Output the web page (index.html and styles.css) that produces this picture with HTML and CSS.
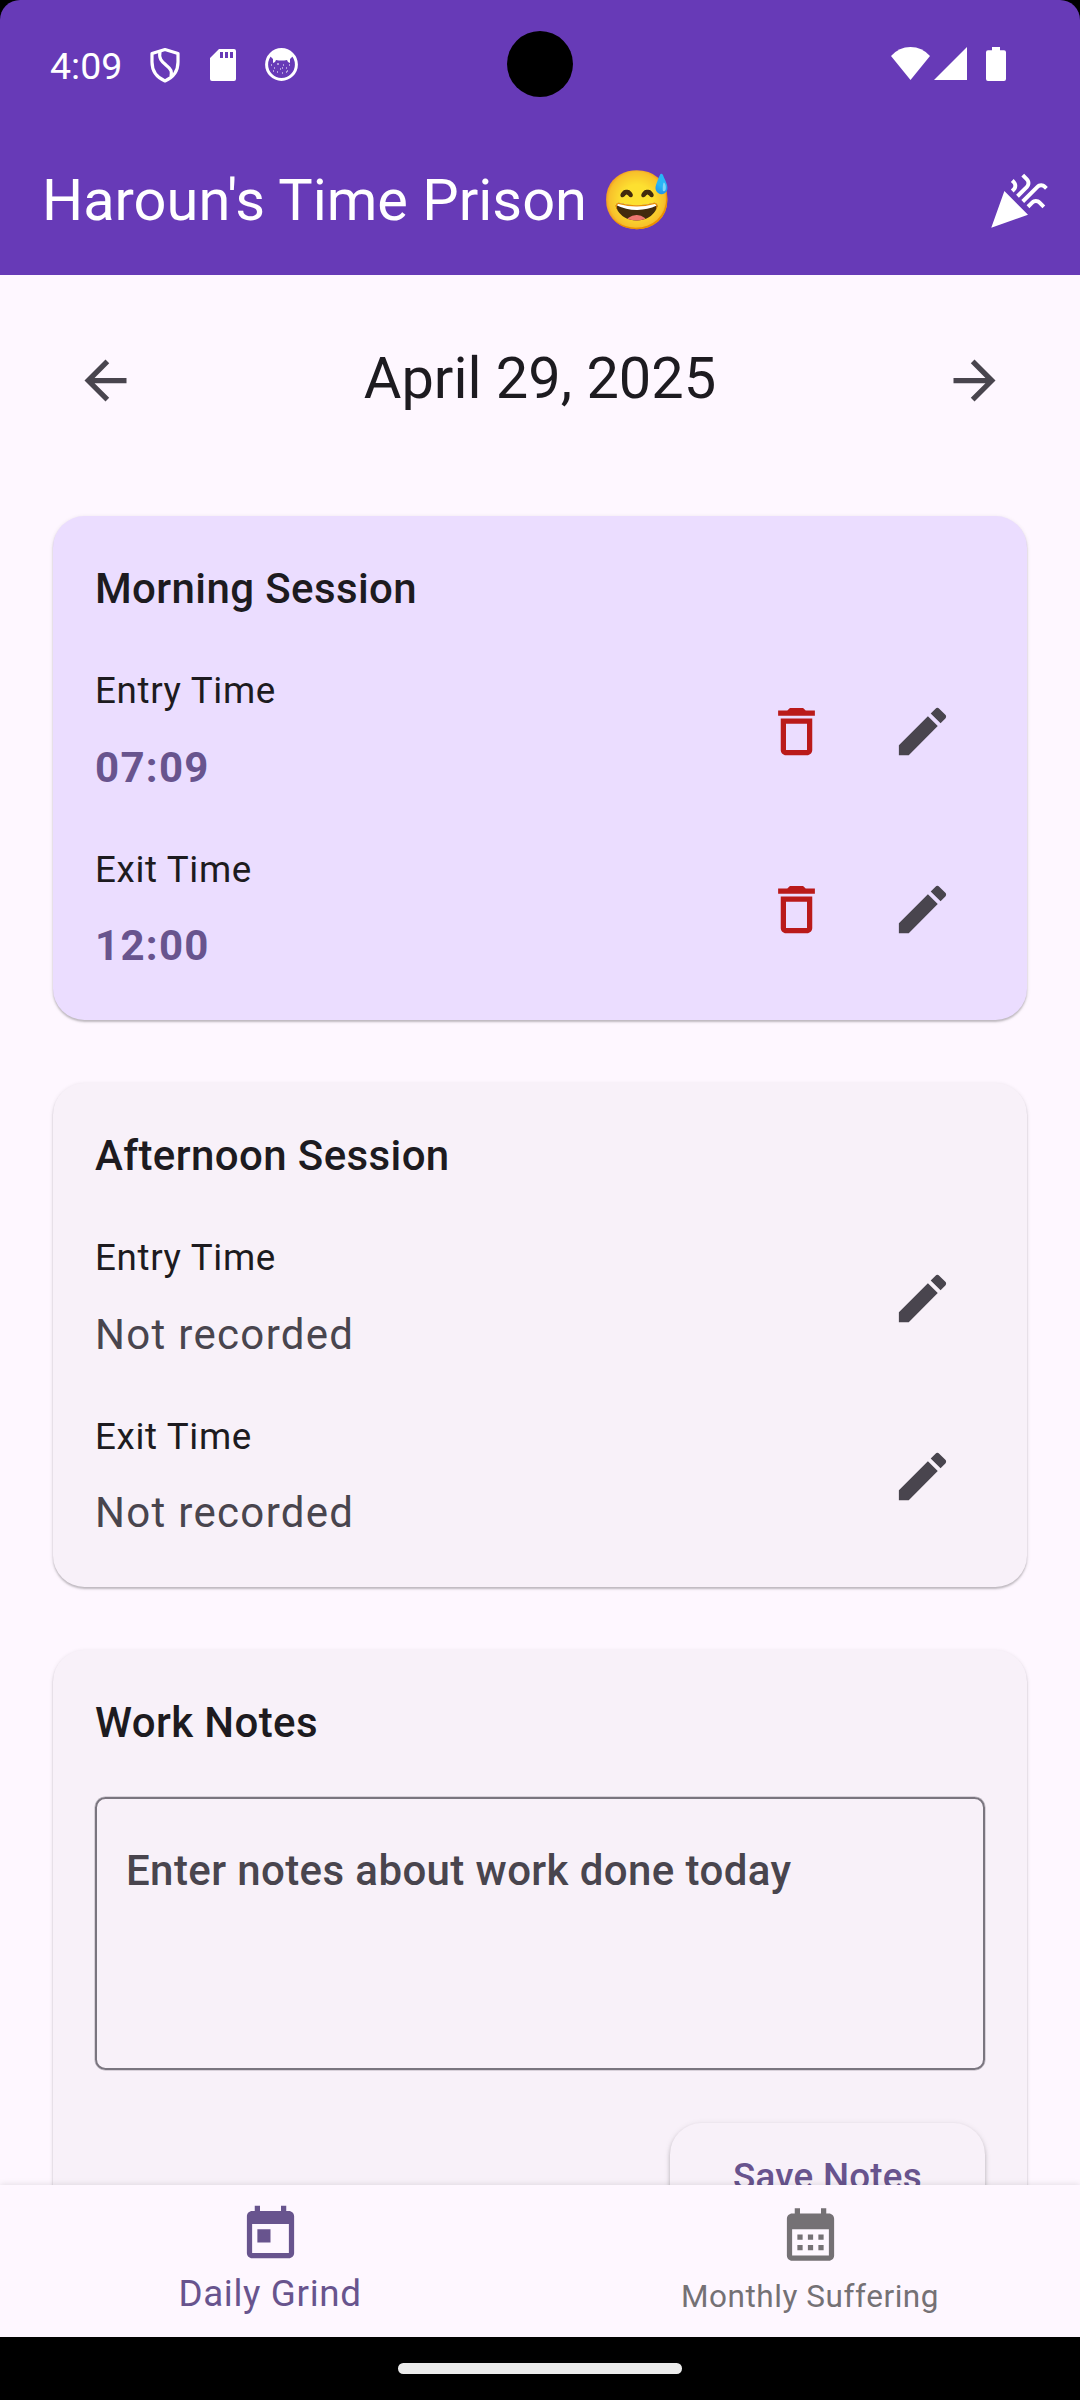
FILE: index.html
```html
<!DOCTYPE html>
<html lang="en">
<head>
<meta charset="utf-8">
<title>Haroun's Time Prison</title>
<link rel="stylesheet" href="styles.css">
</head>
<body>
<svg class="defs" aria-hidden="true">
  <symbol id="trash" viewBox="0 0 24 24"><path d="M16 9v10H8V9h8m-1.5-6h-5l-1 1H5v2h14V4h-3.500l-1-1zM18 7H6v12c0 1.100.9 2 2 2h8c1.100 0 2-.9 2-2V7z"/></symbol>
  <symbol id="pencil" viewBox="0 0 24 24"><path d="M3 17.250V21h3.750L17.810 9.940l-3.750-3.750L3 17.250zM20.710 7.040c.39-.39.39-1.020 0-1.410l-2.340-2.340c-.39-.39-1.020-.39-1.410 0l-1.830 1.830 3.750 3.750 1.830-1.830z"/></symbol>
</svg>
<div class="screen">
  <header class="top">
    <div class="status">
      <span class="clock">4:09</span>
      <svg class="st-shield" viewBox="0 0 30 36" width="30" height="36"><path d="M15 2.500L2 6.500V15c0 9 5 15.500 13 19 8-3.500 13-10 13-19V6.500z"/><path d="M10 4.500C8.500 12 12 14.500 16.500 18.500c5 4 5.500 6 4.500 11"/></svg>
      <svg class="st-sd" viewBox="0 0 26 32" width="26" height="32"><path fill-rule="evenodd" d="M9 0h15a2 2 0 0 1 2 2v28a2 2 0 0 1-2 2H2a2 2 0 0 1-2-2V9zM10 3v6h3V3zm5 0v6h3V3zm5 0v6h3V3z"/></svg>
      <svg class="st-face" viewBox="0 0 33 33" width="33" height="33"><circle cx="16.500" cy="16.500" r="14.900"/><path d="M5 8Q10 2 16.500 2T28 8l-3 3v4l-2-1-1-2q-5.500 1-11 0l-1 2-2 1v-4z"/><path class="dots" d="M6 17h1m2 3h1m2-4h1m2 5h1m2-4h1m2 3h1m2-3h1M8 23h1m3 1h1m4 1h1m3-1h1m-9-8h1m8 7h1m-6-3h1"/></svg>
      <svg class="st-wifi" viewBox="0 0 39 33" width="39" height="33"><path d="M0 9Q8 0 19.500 0T39 9L19.500 33z"/></svg>
      <svg class="st-signal" viewBox="0 0 33 33" width="33" height="33"><path d="M33 0v33H0z"/></svg>
      <svg class="st-battery" viewBox="0 0 20 34" width="20" height="34"><path d="M6 0h8v3.300h4a2 2 0 0 1 2 2V32a2 2 0 0 1-2 2H2a2 2 0 0 1-2-2V5.300a2 2 0 0 1 2-2h4z"/></svg>
      <i class="camera"></i>
    </div>
    <div class="appbar">
      <h1>Haroun's Time Prison <span class="emoji">😅</span></h1>
      <span class="icon-btn"><svg class="icon" viewBox="0 0 24 24"><path d="M2 22l14-5-9-9zM14.530 12.530l5.590-5.590c.49-.49 1.280-.49 1.770 0l.59.59 1.060-1.060-.59-.59c-1.070-1.070-2.820-1.070-3.890 0l-5.590 5.590 1.060 1.060zM10.060 6.880l-.59.59 1.060 1.060.59-.59c1.070-1.070 1.070-2.820 0-3.890l-.59-.59-1.060 1.070.59.59c.48.48.48 1.280 0 1.760zM17.060 11.880l-1.590 1.590 1.060 1.060 1.590-1.590c.49-.49 1.280-.49 1.770 0l1.610 1.610 1.060-1.060-1.610-1.610c-1.080-1.070-2.820-1.070-3.890 0zM15.060 5.880l-3.590 3.590 1.060 1.060 3.590-3.590c1.070-1.070 1.070-2.820 0-3.890l-1.590-1.590-1.060 1.060 1.590 1.590c.48.49.48 1.290 0 1.770z"/></svg></span>
    </div>
  </header>

  <main class="content">
    <div class="date-nav">
      <span class="icon-btn"><svg class="icon" viewBox="0 0 24 24"><path d="M20 11H7.830l5.590-5.590L12 4l-8 8 8 8 1.410-1.410L7.830 13H20v-2z"/></svg></span>
      <h2>April 29, 2025</h2>
      <span class="icon-btn"><svg class="icon" viewBox="0 0 24 24"><path d="M12 4l-1.410 1.410L16.170 11H4v2h12.170l-5.580 5.590L12 20l8-8z"/></svg></span>
    </div>

    <section class="card filled">
      <h3>Morning Session</h3>
      <div class="row">
        <div class="entry"><span class="label">Entry Time</span><span class="time">07:09</span></div>
        <span class="icon-btn danger"><svg class="icon"><use href="#trash"/></svg></span>
        <span class="icon-btn"><svg class="icon"><use href="#pencil"/></svg></span>
      </div>
      <div class="row">
        <div class="entry"><span class="label">Exit Time</span><span class="time">12:00</span></div>
        <span class="icon-btn danger"><svg class="icon"><use href="#trash"/></svg></span>
        <span class="icon-btn"><svg class="icon"><use href="#pencil"/></svg></span>
      </div>
    </section>

    <section class="card">
      <h3>Afternoon Session</h3>
      <div class="row">
        <div class="entry"><span class="label">Entry Time</span><span class="time empty">Not recorded</span></div>
        <span class="icon-btn"><svg class="icon"><use href="#pencil"/></svg></span>
      </div>
      <div class="row">
        <div class="entry"><span class="label">Exit Time</span><span class="time empty">Not recorded</span></div>
        <span class="icon-btn"><svg class="icon"><use href="#pencil"/></svg></span>
      </div>
    </section>

    <section class="card">
      <h3>Work Notes</h3>
      <div class="notes">Enter notes about work done today</div>
      <div class="save">Save Notes</div>
    </section>
  </main>

  <nav class="tabs">
    <div class="tab active">
      <svg class="icon" viewBox="0 0 24 24"><path d="M19 3h-1V1h-2v2H8V1H6v2H5c-1.110 0-1.990.9-1.990 2L3 19c0 1.100.89 2 2 2h14c1.100 0 2-.9 2-2V5c0-1.100-.9-2-2-2zm0 16H5V8h14v11zM7 10h5v5H7z"/></svg>
      <span>Daily Grind</span>
    </div>
    <div class="tab">
      <svg class="icon" viewBox="0 0 24 24"><path d="M19 4h-1V2h-2v2H8V2H6v2H5c-1.110 0-1.990.9-1.990 2L3 20c0 1.100.89 2 2 2h14c1.100 0 2-.9 2-2V6c0-1.100-.9-2-2-2zm0 16H5V10h14v10zM9 14H7v-2h2v2zm4 0h-2v-2h2v2zm4 0h-2v-2h2v2zm-8 4H7v-2h2v2zm4 0h-2v-2h2v2zm4 0h-2v-2h2v2z"/></svg>
      <span>Monthly Suffering</span>
    </div>
  </nav>
  <footer class="gesture"><i></i></footer>
</div>
</body>
</html>
```
FILE: styles.css
```css
* { box-sizing: border-box; }
body { margin: 0; background: #000; font-family: Roboto, sans-serif; color: #1d1b20; }
h1, h2, h3 { margin: 0; font-weight: 400; }
svg { display: block; fill: currentColor; flex: none; }
.defs { position: absolute; width: 0; height: 0; }
.screen { width: 1080px; height: 2400px; display: flex; flex-direction: column; overflow: hidden; }

.top { height: 275px; flex: none; background: #673ab7; color: #fff; border-radius: 20px 20px 0 0; }
.status { height: 128px; position: relative; display: flex; align-items: flex-start; padding: 47px 74px 0 50px; }
.clock { width: 100px; font-size: 37.5px; line-height: 38px; }
.st-shield { fill: none; stroke: #fff; stroke-width: 3.2; stroke-linejoin: round; }
.st-sd { margin: 2px 0 0 30px; }
.st-face { margin: 1px 0 0 28.5px; }
.st-face circle { fill: none; stroke: #fff; stroke-width: 3; }
.st-face .dots { stroke: #fff; stroke-width: 1.2; fill: none; }
.st-wifi { margin-left: auto; }
.st-signal { margin-left: 4px; }
.st-battery { margin-left: 19px; }
.camera { position: absolute; left: 507px; top: 31px; width: 66px; height: 66px; border-radius: 50%; background: #000; }

.appbar { height: 147px; display: flex; align-items: center; justify-content: space-between; padding: 0 0 0 42px; }
.appbar h1, .date-nav h2 { font-size: 57.75px; line-height: 73.5px; white-space: nowrap; }
.appbar h1 { padding-bottom: 1.5px; }
.icon-btn { width: 126px; height: 126px; flex: none; display: flex; align-items: center; justify-content: center; color: #49454e; }
.appbar .icon-btn { color: #fff; }
.icon { width: 63px; height: 63px; }

.content { flex: 1; min-height: 0; overflow: hidden; background: #fef7ff; padding: 42px 42px 0; }
.date-nav { height: 126px; display: flex; align-items: center; justify-content: space-between; margin-bottom: 73px; }
.date-nav h2 { padding-bottom: 2px; }

.card { margin: 0 11px 63px; padding: 42px; border-radius: 31.5px; background: #f8f1f9;
  box-shadow: 0 2px 2px rgba(0,0,0,.2), 0 1px 4px rgba(0,0,0,.1); }
.card.filled { background: #ebddff; }
.card h3 { height: 63px; font-size: 42px; line-height: 61px; font-weight: 500; letter-spacing: .394px; }
.row { display: flex; align-items: center; height: 136.5px; margin-top: 42px; }
.entry { flex: 1; display: flex; flex-direction: column; gap: 18px; }
.label { font-size: 36.75px; line-height: 55.5px; letter-spacing: .656px; }
.time { height: 63px; font-size: 42px; line-height: 61px; font-weight: 700; letter-spacing: 1.3125px; color: #68548e; }
.time.empty { font-weight: 400; color: #49454e; }
.danger { color: #ba1a1a; }

.notes { height: 273px; margin-top: 42px; padding: 40px 29px; border: 2px solid #7a757f; border-radius: 10.5px;
  box-shadow: 0 0 0 .5px rgba(122,117,127,.5);
  font-size: 42px; line-height: 63px; font-weight: 500; letter-spacing: .394px; color: #49454e; }
.save { width: 315px; height: 105px; margin: 52.5px 0 0 auto; border-radius: 31.5px; background: #f8f1f9; color: #68548e;
  font-size: 36.75px; line-height: 108px; font-weight: 500; letter-spacing: .2625px; text-align: center;
  box-shadow: 0 3px 4px rgba(0,0,0,.2), 0 1px 6px rgba(0,0,0,.1); }

.tabs { position: relative; height: 152px; flex: none; display: flex; background: #fef7ff; box-shadow: 0 -1px 6px rgba(0,0,0,.1); }
.tab { flex: 1; display: flex; flex-direction: column; align-items: center; padding-top: 18px; color: #757175; font-size: 31.5px; letter-spacing: .56px; }
.tab span { line-height: 45px; margin-top: 8px; }
.tab.active { color: #68548e; font-size: 36.75px; letter-spacing: .656px; }
.tab.active span { margin-top: 5px; }
.gesture { height: 63px; flex: none; background: #000; display: flex; justify-content: center; padding-top: 26px; }
.gesture i { width: 284px; height: 10.5px; border-radius: 5.25px; background: #ebebeb; }
```
